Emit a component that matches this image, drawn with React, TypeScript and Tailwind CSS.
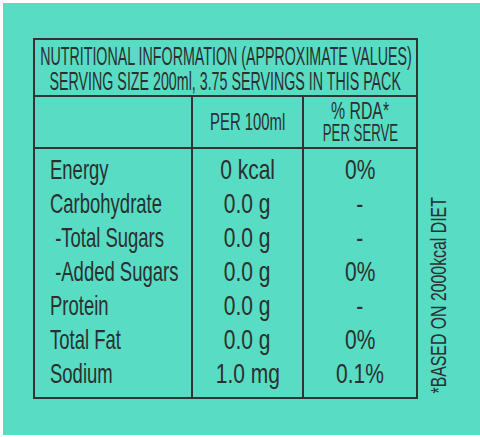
const rows = [
  ["Energy", "0 kcal", "0%"],
  ["Carbohydrate", "0.0 g", "-"],
  ["\u00a0-Total Sugars", "0.0 g", "-"],
  ["\u00a0-Added Sugars", "0.0 g", "0%"],
  ["Protein", "0.0 g", "-"],
  ["Total Fat", "0.0 g", "0%"],
  ["Sodium", "1.0 mg", "0.1%"],
];

// condensed label text: narrow face squeezed a bit more
const Squeeze = ({
  children,
  className = "",
}: {
  children: React.ReactNode;
  className?: string;
}) => (
  <span className={`inline-block whitespace-nowrap ${className}`}>
    {children}
  </span>
);

export default function App() {
  return (
    <div className="w-[480px] h-[437px] bg-white pt-[3px] pl-[3px] pb-[2px] font-['Liberation_Sans_Narrow','Liberation_Sans',sans-serif] text-[#2b302f]">
      <div className="h-full bg-[#58dcc4] pt-[35px] pl-[30px] flex items-start">
        <div className="w-[385px] border-2 border-[#333]">
          <div className="h-[57px] border-b-2 border-[#333] pt-[4px] flex flex-col items-center text-[25px] leading-[25px]">
            <Squeeze className="origin-center scale-x-[0.57]">
              NUTRITIONAL INFORMATION (APPROXIMATE VALUES)
            </Squeeze>
            <Squeeze className="origin-center scale-x-[0.57]">
              SERVING SIZE 200ml, 3.75 SERVINGS IN THIS PACK
            </Squeeze>
          </div>

          <div className="h-[52px] border-b-2 border-[#333] grid grid-cols-[158px_111px_minmax(0,1fr)] text-[24px] leading-[22px]">
            <div className="border-r-2 border-[#333]" />
            <div className="min-w-0 border-r-2 border-[#333] flex items-center justify-center">
              <Squeeze className="origin-center scale-x-[0.62]">PER 100ml</Squeeze>
            </div>
            <div className="min-w-0 flex flex-col items-center justify-center">
              <Squeeze className="origin-center scale-x-[0.66]">% RDA*</Squeeze>
              <Squeeze className="origin-center scale-x-[0.55]">PER SERVE</Squeeze>
            </div>
          </div>

          <div className="h-[248px] grid grid-cols-[158px_111px_minmax(0,1fr)] text-[28px] leading-[34px]">
            <div className="min-w-0 border-r-2 border-[#333] pt-[4px] pl-[15px] flex flex-col items-start">
              {rows.map(([name]) => (
                <Squeeze key={name} className="origin-left scale-x-[0.66]">
                  {name}
                </Squeeze>
              ))}
            </div>
            <div className="min-w-0 border-r-2 border-[#333] pt-[4px] flex flex-col items-center">
              {rows.map(([name, per100]) => (
                <Squeeze key={name} className="origin-center scale-x-[0.75]">
                  {per100}
                </Squeeze>
              ))}
            </div>
            <div className="min-w-0 pt-[4px] flex flex-col items-center">
              {rows.map(([name, , rda]) => (
                <Squeeze key={name} className="origin-center scale-x-[0.75]">
                  {rda}
                </Squeeze>
              ))}
            </div>
          </div>
        </div>

        <div className="ml-[9px] h-[210px] mt-[152px] w-[24px] flex items-center justify-center">
          <span className="[writing-mode:vertical-rl] rotate-180 scale-y-[0.72] whitespace-nowrap text-[22px] leading-[24px]">
            *BASED ON 2000kcal DIET
          </span>
        </div>
      </div>
    </div>
  );
}
